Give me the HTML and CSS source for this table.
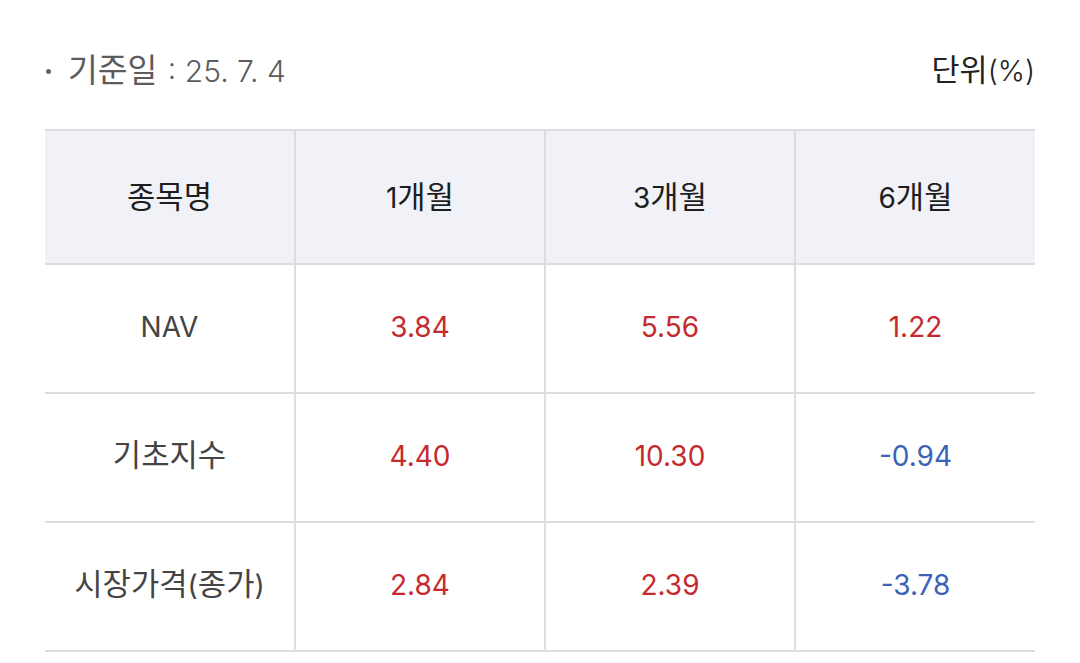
FILE: index.html
```html
<!DOCTYPE html>
<html lang="ko">
<head>
<meta charset="utf-8">
<link rel="stylesheet" href="styles.css">
</head>
<body>
<div class="page">
  <div class="info">
    <div class="base-date"><span class="dot"></span><span class="ko">기준일</span>&nbsp;: 25. 7. 4</div>
    <div class="unit"><span class="ko">단위</span>(%)</div>
  </div>
  <table class="perf">
    <colgroup>
      <col class="c1"><col class="c2"><col class="c3"><col class="c4">
    </colgroup>
    <thead>
      <tr><th><span class="ko">종목명</span></th><th>1<span class="ko">개월</span></th><th>3<span class="ko">개월</span></th><th>6<span class="ko">개월</span></th></tr>
    </thead>
    <tbody>
      <tr><td class="name">NAV</td><td class="up">3.84</td><td class="up">5.56</td><td class="up">1.22</td></tr>
      <tr><td class="name"><span class="ko">기초지수</span></td><td class="up">4.40</td><td class="up">10.30</td><td class="down">-0.94</td></tr>
      <tr><td class="name"><span class="ko">시장가격</span>(<span class="ko">종가</span>)</td><td class="up">2.84</td><td class="up">2.39</td><td class="down">-3.78</td></tr>
    </tbody>
  </table>
</div>
</body>
</html>
```

FILE: styles.css
```css
html, body {
  margin: 0;
  padding: 0;
  background: #ffffff;
}
body {
  font-family: Inter, "Noto Sans CJK KR", sans-serif;
}
.ko {
  font-family: "Noto Sans CJK KR", sans-serif;
  font-size: 1.1em;
  line-height: 1;
}
.page {
  padding: 51px 45px 0 45px;
}
.info {
  display: flex;
  justify-content: space-between;
  align-items: center;
  height: 40px;
  margin-bottom: 38px;
}
.base-date {
  display: flex;
  align-items: baseline;
  font-size: 30px;
  line-height: 40px;
  color: #5c5c5c;
  font-weight: 350;
}
.base-date .ko {
  font-weight: 400;
  font-size: 1.08em;
  margin-right: 2px;
}
.dot {
  align-self: center;
  width: 5px;
  height: 5px;
  border-radius: 50%;
  background: #666;
  margin: 0 18px 0 0;
  position: relative;
  left: 1px;
}
.unit {
  font-size: 29px;
  line-height: 40px;
  color: #222;
  font-weight: 300;
}
.unit .ko { font-weight: 400; font-size: 1.05em; }
.perf {
  width: 990px;
  border-collapse: collapse;
  table-layout: fixed;
}
.c1, .c2, .c3 { width: 250px; }
.c4 { width: 240px; }
.perf th, .perf td {
  text-align: center;
  border-top: 2px solid #dcdde2;
  border-bottom: 2px solid #dcdde2;
  border-left: 2px solid #dcdde2;
  padding: 0;
  font-size: 28px;
  line-height: 34px;
  font-weight: 400;
}
.perf th:first-child, .perf td:first-child { border-left: none; }
.perf th {
  background: #f1f2f7;
  color: #1e1e1e;
  height: 132px;
}
.perf td {
  height: 123px;
  padding-bottom: 4px;
}
.perf td.name { color: #444; }
.perf td.up { color: #c62a2f; }
.perf td.down { color: #3a63b8; }
```
